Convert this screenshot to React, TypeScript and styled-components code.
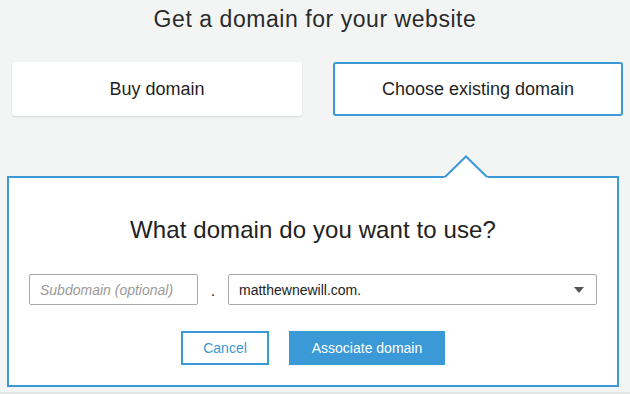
import React from "react";
import styled, { createGlobalStyle } from "styled-components";

const Global = createGlobalStyle`
  html, body { margin: 0; padding: 0; background: #f3f5f5; }
  body { font-family: "Liberation Sans", Arial, Helvetica, sans-serif; color: #222; }
  * { box-sizing: border-box; }
`;

const Page = styled.div`
  width: 630px;
  height: 394px;
  display: flex;
  flex-direction: column;
  overflow: hidden;
  border-bottom: 2px solid #e4e6e6;
`;

const Title = styled.h1`
  margin: 5px 0 0;
  font-size: 23px;
  letter-spacing: 0.55px;
  line-height: 28px;
  font-weight: 400;
  text-align: center;
  color: #2b2b2b;
`;

const Choices = styled.div`
  display: grid;
  grid-template-columns: 290px 290px;
  column-gap: 31px;
  margin: 29px 0 0 12px;
`;

const ChoiceCard = styled.button<{ $active?: boolean }>`
  height: 54px;
  display: flex;
  align-items: center;
  justify-content: center;
  background: #fff;
  font-family: inherit;
  font-size: 18px;
  color: #1f1f1f;
  border-radius: 3px;
  border: ${(p) => (p.$active ? "2px solid #3a99d6" : "1px solid transparent")};
  box-shadow: ${(p) => (p.$active ? "none" : "0 1px 2px rgba(0,0,0,0.12)")};
  padding: 0;
`;

const Panel = styled.section`
  position: relative;
  margin: 60px 11px 0 7px;
  background: #fff;
  border: 2px solid #3a99d6;
  padding: 38px 20px 20px;
  display: flex;
  flex-direction: column;
  align-items: stretch;
`;

const Pointer = styled.svg`
  position: absolute;
  top: -22px;
  left: 435px;
  width: 44px;
  height: 24px;
  overflow: visible;
`;

const Question = styled.h2`
  margin: 0;
  font-size: 24px;
  letter-spacing: 0.1px;
  line-height: 28px;
  font-weight: 400;
  text-align: center;
  color: #222;
`;

const FieldRow = styled.div`
  display: grid;
  grid-template-columns: 169px 30px 1fr;
  margin-top: 30px;
  height: 31px;
`;

const TextInput = styled.input`
  height: 31px;
  border: 1px solid #a9a9a9;
  border-radius: 2px;
  padding: 0 10px;
  font-family: inherit;
  font-size: 14px;
  color: #333;
  outline: none;
  &::placeholder { color: #9a9a9a; font-style: italic; }
`;

const Dot = styled.span`
  display: flex;
  align-items: flex-end;
  justify-content: center;
  padding-bottom: 5px;
  font-size: 16px;
  color: #333;
`;

const Select = styled.div`
  height: 31px;
  border: 1px solid #a9a9a9;
  border-radius: 2px;
  padding: 0 10px 0 10px;
  display: flex;
  align-items: center;
  justify-content: space-between;
  font-size: 14px;
  color: #222;
  background: #fff;
`;

const Caret = styled.span`
  width: 0;
  height: 0;
  border-left: 5px solid transparent;
  border-right: 5px solid transparent;
  border-top: 6px solid #555;
  margin-right: 2px;
`;

const Actions = styled.div`
  display: flex;
  justify-content: center;
  gap: 20px;
  margin-top: 26px;
`;

const Btn = styled.button<{ $primary?: boolean; $w: number }>`
  width: ${(p) => p.$w}px;
  height: 34px;
  border: 2px solid #3a99d6;
  background: ${(p) => (p.$primary ? "#3a99d6" : "#fff")};
  color: ${(p) => (p.$primary ? "#fff" : "#3a99d6")};
  font-family: inherit;
  font-size: 14px;
  padding: 0;
`;

export default function App() {
  return (
    <>
      <Global />
      <Page>
        <Title>Get a domain for your website</Title>
        <Choices>
          <ChoiceCard>Buy domain</ChoiceCard>
          <ChoiceCard $active>Choose existing domain</ChoiceCard>
        </Choices>
        <Panel>
          <Pointer viewBox="0 0 44 24">
            <polygon points="0,22 22,0.5 44,22" fill="#fff" />
            <polyline points="1,21 22,0.5 43,21" fill="none" stroke="#3a99d6" strokeWidth="2" />
            <rect x="2" y="21" width="40" height="4" fill="#fff" />
          </Pointer>
          <Question>What domain do you want to use?</Question>
          <FieldRow>
            <TextInput placeholder="Subdomain (optional)" />
            <Dot>.</Dot>
            <Select>
              <span>matthewnewill.com.</span>
              <Caret />
            </Select>
          </FieldRow>
          <Actions>
            <Btn $w={88}>Cancel</Btn>
            <Btn $primary $w={156}>Associate domain</Btn>
          </Actions>
        </Panel>
      </Page>
    </>
  );
}
